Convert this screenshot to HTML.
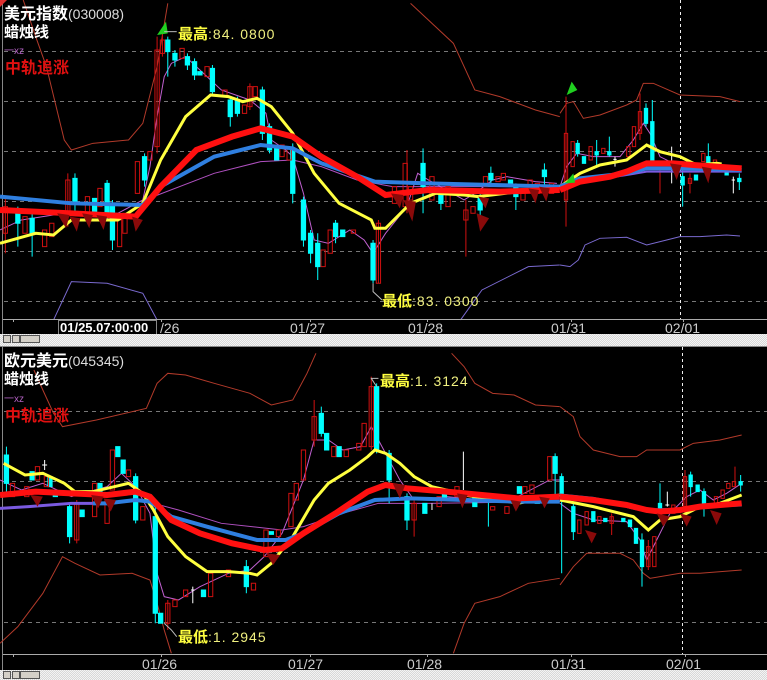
<!DOCTYPE html>
<html><head><meta charset="utf-8"><style>
html,body{margin:0;padding:0;background:#000;width:767px;height:680px;overflow:hidden}
svg{display:block}
.t{font-family:"Liberation Sans","Noto Sans CJK SC",sans-serif}
.n{vector-effect:non-scaling-stroke}
</style></head><body>
<svg width="767" height="680" viewBox="0 0 767 680" xmlns="http://www.w3.org/2000/svg">
<defs>
<pattern id="chk" width="2" height="2" patternUnits="userSpaceOnUse"><rect width="2" height="2" fill="#d8d8d8"/><rect width="1" height="1" fill="#f4f4f4"/><rect x="1" y="1" width="1" height="1" fill="#f4f4f4"/></pattern>
</defs>
<rect width="767" height="680" fill="#000"/>
<g stroke="#777" stroke-dasharray="4,4" stroke-width="1">
<line x1="4" y1="51.5" x2="767" y2="51.5"/><line x1="4" y1="101.5" x2="767" y2="101.5"/><line x1="4" y1="151.5" x2="767" y2="151.5"/><line x1="4" y1="201.5" x2="767" y2="201.5"/><line x1="4" y1="251.5" x2="767" y2="251.5"/><line x1="4" y1="301.5" x2="767" y2="301.5"/>
<line x1="4" y1="411.5" x2="767" y2="411.5"/><line x1="4" y1="481.5" x2="767" y2="481.5"/><line x1="4" y1="552.5" x2="767" y2="552.5"/><line x1="4" y1="622.5" x2="767" y2="622.5"/>
</g>
<g stroke="#eee" stroke-dasharray="3,3" stroke-width="1">
<line x1="680.5" y1="0" x2="680.5" y2="319"/><line x1="682.5" y1="347" x2="682.5" y2="654"/>
</g>
<line x1="2.5" y1="0" x2="2.5" y2="680" stroke="#888"/>

<g transform="scale(0.357,0.3333)" fill="none">
<polyline class="n" stroke="#b23a2a" stroke-width="1" points="65,0 100,110 130,200 180,420 200,450 260,430 360,420 400,370 440,200 470,10"/>
<polyline class="n" stroke="#b23a2a" stroke-width="1" points="1150,10 1270,130 1330,270 1400,290 1500,330 1568,350"/>
<polyline class="n" stroke="#7a6ad0" stroke-width="1" points="150,960 200,845 300,850 400,880 440,960"/>
<polyline class="n" stroke="#7a6ad0" stroke-width="1" points="1290,960 1350,870 1480,800 1568,795"/>
<polyline class="n" stroke="#b050c0" stroke-width="1" points="430,590 600,520 730,485 820,480 900,500 1000,540 1100,560 1568,560"/>
<polyline class="n" stroke="#c060d0" stroke-width="1" points="0,690 60,660 180,640 330,640 400,600 420,500 440,350 460,230 480,190 520,170 560,210 620,270 700,300 745,340 760,420 800,450 820,470 850,580 880,720 920,730 980,690 1020,720 1045,760 1080,700 1140,620 1170,520 1200,540 1300,600 1330,580 1380,540 1420,530 1500,545 1560,550"/>
<g stroke-width="1">
<g stroke="#0ff" fill="#0ff">
<rect class="n" x="44" y="640" width="12" height="30"/><rect class="n" x="84" y="655" width="12" height="45"/><rect class="n" x="204" y="535" width="12" height="75"/><rect class="n" x="259" y="595" width="12" height="45"/><rect class="n" x="294" y="550" width="12" height="90"/><rect class="n" x="309" y="610" width="12" height="110"/><rect class="n" x="399" y="470" width="12" height="70"/><rect class="n" x="464" y="120" width="12" height="35"/><rect class="n" x="484" y="160" width="12" height="20"/><rect class="n" x="519" y="170" width="12" height="25"/><rect class="n" x="539" y="185" width="12" height="40"/><rect class="n" x="554" y="215" width="12" height="10"/><rect class="n" x="589" y="205" width="12" height="70"/><rect class="n" x="639" y="300" width="12" height="50"/><rect class="n" x="659" y="300" width="12" height="40"/><rect class="n" x="729" y="270" width="12" height="130"/><rect class="n" x="749" y="380" width="12" height="70"/><rect class="n" x="769" y="440" width="12" height="40"/><rect class="n" x="814" y="450" width="12" height="130"/><rect class="n" x="844" y="600" width="12" height="120"/><rect class="n" x="864" y="700" width="12" height="60"/><rect class="n" x="884" y="730" width="12" height="70"/><rect class="n" x="934" y="670" width="12" height="40"/><rect class="n" x="954" y="690" width="12" height="20"/><rect class="n" x="1039" y="730" width="12" height="110"/><rect class="n" x="1179" y="490" width="12" height="70"/><rect class="n" x="1229" y="580" width="12" height="30"/><rect class="n" x="1339" y="590" width="12" height="40"/><rect class="n" x="1369" y="520" width="12" height="20"/><rect class="n" x="1424" y="540" width="12" height="10"/><rect class="n" x="1439" y="560" width="12" height="30"/><rect class="n" x="1519" y="510" width="12" height="20"/>
<path class="n" d="M50 620V740M90 640V770M210 520V640M300 540V660M315 600V750M405 460V560M470 110V230M490 150V200M525 160V210M545 175V240M595 195V285M645 290V380M665 290V350M735 260V420M755 370V460M820 430V610M850 590V740M870 690V790M890 700V840M940 660V730M1045 720V850M1185 445V640M1235 570V630M1345 580V650M1375 500V560M1445 550V630M1525 490V560"/>
</g>
<g stroke="#d01010" fill="none">
<rect class="n" x="9" y="620" width="12" height="80"/><rect class="n" x="64" y="650" width="12" height="50"/><rect class="n" x="119" y="690" width="12" height="50"/><rect class="n" x="139" y="670" width="12" height="40"/><rect class="n" x="184" y="540" width="12" height="100"/><rect class="n" x="239" y="590" width="12" height="50"/><rect class="n" x="274" y="565" width="12" height="55"/><rect class="n" x="329" y="660" width="12" height="80"/><rect class="n" x="344" y="640" width="12" height="60"/><rect class="n" x="379" y="485" width="12" height="95"/><rect class="n" x="414" y="455" width="12" height="25"/><rect class="n" x="434" y="150" width="12" height="290"/><rect class="n" x="449" y="120" width="12" height="40"/><rect class="n" x="504" y="145" width="12" height="30"/><rect class="n" x="574" y="200" width="12" height="30"/><rect class="n" x="624" y="270" width="12" height="20"/><rect class="n" x="679" y="315" width="12" height="25"/><rect class="n" x="694" y="260" width="12" height="60"/><rect class="n" x="709" y="260" width="12" height="30"/><rect class="n" x="784" y="435" width="12" height="35"/><rect class="n" x="804" y="445" width="12" height="35"/><rect class="n" x="899" y="750" width="12" height="50"/><rect class="n" x="919" y="690" width="12" height="70"/><rect class="n" x="984" y="690" width="12" height="10"/><rect class="n" x="1054" y="670" width="12" height="180"/><rect class="n" x="1099" y="560" width="12" height="50"/><rect class="n" x="1129" y="490" width="12" height="130"/><rect class="n" x="1144" y="560" width="12" height="40"/><rect class="n" x="1204" y="530" width="12" height="70"/><rect class="n" x="1249" y="560" width="12" height="60"/><rect class="n" x="1299" y="630" width="12" height="30"/><rect class="n" x="1319" y="620" width="12" height="20"/><rect class="n" x="1354" y="530" width="12" height="30"/><rect class="n" x="1389" y="530" width="12" height="15"/><rect class="n" x="1404" y="520" width="12" height="20"/><rect class="n" x="1459" y="570" width="12" height="30"/><rect class="n" x="1479" y="540" width="12" height="20"/><rect class="n" x="1499" y="550" width="12" height="30"/><rect class="n" x="1539" y="550" width="12" height="30"/>
<path class="n" d="M15 590V760M190 520V680M440 110V460M455 100V170M700 250V330M1060 660V850M1305 600V770M1140 450V640"/>
</g>
</g>
<polyline class="n" stroke="#ffff40" stroke-width="3" points="0,730 100,700 150,705 200,660 330,660 400,610 450,480 520,350 590,285 640,290 680,305 720,295 760,320 820,400 880,520 950,610 1040,660 1050,685 1080,685 1150,610 1220,580 1300,585 1340,590"/>
<polyline class="n" stroke="#ffff40" stroke-width="3" points="1340,590 1568,560"/>
<polyline class="n" stroke="#2f7fe0" stroke-width="4" points="0,590 200,610 400,615 450,560 600,470 730,435 820,445 900,490 1050,545 1200,550 1568,560"/>
<polyline class="n" stroke="#ff1010" stroke-width="6" points="0,630 200,640 380,650 450,560 550,450 650,410 730,385 820,410 900,470 1000,530 1080,585 1200,570 1400,575 1568,570"/>
<g fill="#8a0a0a">
<path d="M160,640 l35,5 l-10,40z"/><path d="M195,650 l30,5 l-10,40z"/><path d="M230,640 l30,5 l-10,40z"/><path d="M270,645 l30,5 l-10,40z"/><path d="M370,650 l30,10 l-20,35z"/><path d="M1095,580 l35,5 l-10,40z"/><path d="M1130,600 l35,5 l-10,60z"/><path d="M1335,640 l35,15 l-25,40z"/><path d="M1340,590 l30,5 l-10,30z"/><path d="M1480,565 l30,5 l-10,40z"/><path d="M1510,560 l30,5 l-10,40z"/>
</g>
<path d="M465,65 L440,105 L470,100z" fill="#20d020"/>
<polyline class="n" stroke="#bbb" stroke-width="1" points="460,95 495,95"/>
<polyline class="n" stroke="#bbb" stroke-width="1" points="1045,850 1045,875 1070,900"/>
</g>

<g transform="translate(560,0) scale(0.3333)" fill="none">
<polyline class="n" stroke="#b23a2a" stroke-width="1" points="0,340 20,310 40,305 70,355 120,345 200,315 230,300 250,250 280,250 360,285 480,290 540,305"/>
<polyline class="n" stroke="#7a6ad0" stroke-width="1" points="0,795 30,800 55,780 75,735 120,715 200,712 260,735 320,720 360,710 420,710 500,705 540,708"/>
<polyline class="n" stroke="#c060d0" stroke-width="1" points="0,560 20,500 50,460 100,470 180,470 220,420 250,370 270,400 300,470 340,490 400,510 450,505 540,510"/>
<g stroke="#0ff" fill="#0ff">
<rect class="n" x="48" y="430" width="10" height="30"/><rect class="n" x="67" y="470" width="10" height="20"/><rect class="n" x="105" y="455" width="10" height="10"/><rect class="n" x="143" y="455" width="10" height="10"/><rect class="n" x="253" y="325" width="10" height="45"/><rect class="n" x="272" y="365" width="10" height="120"/><rect class="n" x="363" y="530" width="10" height="25"/><rect class="n" x="403" y="525" width="10" height="15"/><rect class="n" x="440" y="470" width="10" height="20"/><rect class="n" x="495" y="515" width="10" height="10"/><rect class="n" x="533" y="535" width="10" height="10"/>
<path class="n" d="M53 420V470M110 420V500M148 410V470M258 310V380M277 300V490M368 500V620M445 430V500M538 520V570"/>
</g>
<g stroke="#d01010" fill="none">
<rect class="n" x="13" y="400" width="10" height="200"/><rect class="n" x="33" y="425" width="10" height="75"/><rect class="n" x="87" y="440" width="10" height="40"/><rect class="n" x="125" y="445" width="10" height="15"/><rect class="n" x="200" y="440" width="10" height="30"/><rect class="n" x="217" y="380" width="10" height="60"/><rect class="n" x="235" y="335" width="10" height="65"/><rect class="n" x="385" y="535" width="10" height="15"/><rect class="n" x="425" y="460" width="10" height="25"/><rect class="n" x="460" y="480" width="10" height="10"/>
<path class="n" d="M18 290V680M240 280V420M300 500V580M390 520V580"/>
</g>
<path class="n" stroke="#fff" d="M165 470V500M160 478H170M335 440V550M520 530V580M515 540H525"/>
<polyline class="n" stroke="#ffff40" stroke-width="3" points="0,560 60,520 120,495 200,480 260,435 300,455 360,470 410,495 470,490 485,492"/>
<polyline class="n" stroke="#7a5ae0" stroke-width="2" points="0,565 100,540 200,525 260,515 360,515 545,515"/>
<polyline class="n" stroke="#2f7fe0" stroke-width="4" points="0,560 60,535 200,520 260,505 360,505 545,510"/>
<polyline class="n" stroke="#ff1010" stroke-width="6" points="0,570 60,545 150,530 200,515 260,490 340,490 400,495 545,505"/>
<g fill="#8a0a0a"><path d="M330,490 l35,5 l-15,45z"/><path d="M425,500 l30,5 l-10,45z"/></g>
<path d="M35,245 L20,285 L52,270z" fill="#20d020"/>
<path d="M40,520 L15,550 L45,548z" fill="#20d020"/>
</g>

<g transform="translate(0,340) scale(0.357,0.3333)" fill="none">
<polyline class="n" stroke="#b23a2a" stroke-width="1" points="95,90 120,150 150,220 175,260 270,240 410,205 440,130 470,100 520,105 600,130 700,160 760,195 820,180 860,100 885,40"/>
<polyline class="n" stroke="#b23a2a" stroke-width="1" points="1265,40 1300,80 1330,130 1380,160 1440,165 1500,195 1568,200"/>
<polyline class="n" stroke="#b23a2a" stroke-width="1" points="0,910 50,860 120,760 175,650 210,670 280,705 370,700 420,720 440,790 460,870 480,940"/>
<polyline class="n" stroke="#b23a2a" stroke-width="1" points="1270,940 1300,850 1330,790 1400,770 1480,730 1568,715"/>
<polyline class="n" stroke="#c060d0" stroke-width="1" points="0,420 60,450 120,430 200,470 300,440 340,400 380,440 420,520 440,700 460,770 500,780 560,740 640,700 700,690 740,650 790,580 820,500 850,420 880,300 920,300 960,330 1010,320 1040,260 1060,300 1080,340 1120,420 1160,480 1250,470 1350,480 1450,470 1540,420 1568,420"/>
<polyline class="n" stroke="#b050c0" stroke-width="1" points="430,490 500,510 620,550 790,570 850,560 960,520 1060,490 1200,490 1568,485"/>
<g stroke="#0ff" fill="#0ff">
<rect class="n" x="12" y="345" width="12" height="85"/><rect class="n" x="84" y="395" width="12" height="25"/><rect class="n" x="134" y="410" width="12" height="30"/><rect class="n" x="149" y="460" width="12" height="10"/><rect class="n" x="189" y="500" width="12" height="90"/><rect class="n" x="224" y="510" width="12" height="20"/><rect class="n" x="274" y="430" width="12" height="30"/><rect class="n" x="324" y="320" width="12" height="30"/><rect class="n" x="339" y="360" width="12" height="40"/><rect class="n" x="374" y="410" width="12" height="130"/><rect class="n" x="429" y="530" width="12" height="290"/><rect class="n" x="444" y="820" width="12" height="30"/><rect class="n" x="564" y="750" width="12" height="20"/><rect class="n" x="684" y="680" width="12" height="60"/><rect class="n" x="754" y="575" width="12" height="8"/><rect class="n" x="894" y="220" width="12" height="60"/><rect class="n" x="909" y="280" width="12" height="50"/><rect class="n" x="944" y="320" width="12" height="30"/><rect class="n" x="1049" y="140" width="12" height="190"/><rect class="n" x="1084" y="340" width="12" height="80"/><rect class="n" x="1134" y="470" width="12" height="70"/><rect class="n" x="1184" y="490" width="12" height="30"/><rect class="n" x="1239" y="460" width="12" height="20"/><rect class="n" x="1324" y="470" width="12" height="30"/><rect class="n" x="1449" y="440" width="12" height="20"/><rect class="n" x="1499" y="470" width="12" height="20"/><rect class="n" x="1549" y="350" width="12" height="50"/>
<path class="n" d="M18 320V470M195 490V610M380 400V550M435 490V850M690 660V760M900 200V290M1055 130V340M1090 330V490M1140 460V570M1368 480V560M1555 340V470"/>
</g>
<g stroke="#d01010" fill="none">
<rect class="n" x="29" y="430" width="12" height="40"/><rect class="n" x="69" y="440" width="12" height="30"/><rect class="n" x="99" y="380" width="12" height="40"/><rect class="n" x="124" y="410" width="12" height="30"/><rect class="n" x="209" y="490" width="12" height="110"/><rect class="n" x="259" y="430" width="12" height="100"/><rect class="n" x="294" y="480" width="12" height="70"/><rect class="n" x="309" y="330" width="12" height="120"/><rect class="n" x="354" y="390" width="12" height="20"/><rect class="n" x="394" y="500" width="12" height="40"/><rect class="n" x="464" y="790" width="12" height="60"/><rect class="n" x="484" y="780" width="12" height="20"/><rect class="n" x="514" y="750" width="12" height="20"/><rect class="n" x="584" y="700" width="12" height="70"/><rect class="n" x="634" y="690" width="12" height="20"/><rect class="n" x="704" y="730" width="12" height="20"/><rect class="n" x="739" y="570" width="12" height="80"/><rect class="n" x="774" y="570" width="12" height="20"/><rect class="n" x="809" y="460" width="12" height="100"/><rect class="n" x="824" y="430" width="12" height="50"/><rect class="n" x="844" y="330" width="12" height="90"/><rect class="n" x="874" y="230" width="12" height="70"/><rect class="n" x="929" y="320" width="12" height="30"/><rect class="n" x="964" y="330" width="12" height="20"/><rect class="n" x="999" y="310" width="12" height="20"/><rect class="n" x="1014" y="250" width="12" height="70"/><rect class="n" x="1034" y="140" width="12" height="180"/><rect class="n" x="1154" y="490" width="12" height="50"/><rect class="n" x="1224" y="470" width="12" height="30"/><rect class="n" x="1274" y="440" width="12" height="30"/><rect class="n" x="1374" y="500" width="12" height="10"/><rect class="n" x="1414" y="500" width="12" height="20"/><rect class="n" x="1464" y="440" width="12" height="20"/><rect class="n" x="1484" y="435" width="12" height="25"/><rect class="n" x="1534" y="350" width="12" height="70"/>
<path class="n" d="M880 180V320M1040 110V330M1160 480V590M215 480V610M470 780V870"/>
</g>
<path class="n" stroke="#fff" d="M125 360V390M118 375H132M540 740V790M535 750H545M1298 335V450M1210 490V510"/>
<polyline class="n" stroke="#ffff40" stroke-width="3" points="10,370 70,405 120,400 180,430 210,455 260,455 320,440 360,430 400,460 430,510 470,590 520,650 580,695 640,695 700,700 720,705 760,670 820,590 880,480 920,430 980,390 1030,350 1050,330 1080,340 1120,370 1160,410 1210,440 1250,450 1300,465 1400,480 1450,490 1568,465"/>
<polyline class="n" stroke="#7a5ae0" stroke-width="3" points="0,505 80,500 200,490 260,490"/>
<polyline class="n" stroke="#2f7fe0" stroke-width="4" points="260,490 300,490 380,480 420,485 480,530 580,560 720,600 800,600 850,580 950,520 1050,480 1150,475 1300,480 1450,485 1568,485"/>
<polyline class="n" stroke="#ff1010" stroke-width="6" points="0,465 100,455 200,460 300,465 380,455 420,470 480,540 560,580 650,610 740,630 790,625 850,580 940,520 1030,455 1080,435 1140,445 1250,455 1350,465 1450,475 1568,470"/>
<g fill="#8a0a0a"><path d="M85,465 l35,5 l-15,30z"/><path d="M255,465 l35,5 l-15,35z"/><path d="M290,475 l35,5 l-15,35z"/><path d="M745,640 l40,5 l-20,30z"/><path d="M1100,430 l35,5 l-15,40z"/><path d="M1280,460 l30,5 l-15,40z"/><path d="M1430,480 l30,5 l-15,30z"/><path d="M1510,470 l30,5 l-15,30z"/></g>
<polyline class="n" stroke="#bbb" stroke-width="1" points="1055,140 1040,115 1060,115"/>
<polyline class="n" stroke="#bbb" stroke-width="1" points="460,850 480,870 495,890"/>
</g>

<g transform="translate(560,340) scale(0.3333)" fill="none">
<polyline class="n" stroke="#b23a2a" stroke-width="1" points="0,200 40,230 60,290 100,330 180,350 230,350 260,330 360,330 400,310 480,300 545,285"/>
<polyline class="n" stroke="#b23a2a" stroke-width="1" points="0,735 40,680 80,640 180,640 220,660 250,700 270,715 360,700 420,700 545,690"/>
<polyline class="n" stroke="#c060d0" stroke-width="1" points="0,490 40,520 100,540 200,545 240,600 260,660 290,600 330,520 380,470 420,450 460,480 500,460 545,430"/>
<g stroke="#0ff" fill="#0ff">
<rect class="n" x="0" y="410" width="10" height="50"/><rect class="n" x="35" y="500" width="10" height="75"/><rect class="n" x="95" y="515" width="10" height="30"/><rect class="n" x="131" y="535" width="10" height="10"/><rect class="n" x="185" y="535" width="10" height="10"/><rect class="n" x="205" y="540" width="10" height="20"/><rect class="n" x="223" y="565" width="10" height="45"/><rect class="n" x="241" y="600" width="10" height="80"/><rect class="n" x="295" y="490" width="10" height="15"/><rect class="n" x="387" y="405" width="10" height="35"/><rect class="n" x="408" y="435" width="10" height="20"/><rect class="n" x="427" y="455" width="10" height="35"/><rect class="n" x="537" y="425" width="10" height="10"/>
<path class="n" d="M5 400V700M40 490V600M246 580V740M300 430V540M392 395V470M432 445V530M542 405V455"/>
</g>
<g stroke="#d01010" fill="none">
<rect class="n" x="53" y="540" width="10" height="40"/><rect class="n" x="75" y="515" width="10" height="40"/><rect class="n" x="113" y="530" width="10" height="20"/><rect class="n" x="150" y="530" width="10" height="20"/><rect class="n" x="260" y="620" width="10" height="60"/><rect class="n" x="278" y="590" width="10" height="90"/><rect class="n" x="335" y="495" width="10" height="25"/><rect class="n" x="370" y="410" width="10" height="90"/><rect class="n" x="463" y="470" width="10" height="20"/><rect class="n" x="483" y="450" width="10" height="25"/><rect class="n" x="500" y="430" width="10" height="15"/><rect class="n" x="517" y="425" width="10" height="15"/>
<path class="n" d="M155 520V585M265 600V690M375 390V520M525 380V440"/>
</g>
<path class="n" stroke="#fff" d="M322 455V500M316 495H328"/>
<polyline class="n" stroke="#ffff40" stroke-width="3" points="0,480 100,500 220,530 265,570 300,540 360,530 420,500 480,490 545,465"/>
<polyline class="n" stroke="#7a5ae0" stroke-width="4" points="200,498 260,512 360,510"/>
<polyline class="n" stroke="#2f7fe0" stroke-width="3" points="0,465 100,475 200,495 260,510 360,508 420,500 545,495"/>
<polyline class="n" stroke="#ff1010" stroke-width="6" points="0,470 100,480 200,495 260,510 300,515 360,510 420,500 545,490"/>
<g fill="#8a0a0a"><path d="M75,570 l35,10 l-15,30z"/><path d="M290,520 l40,10 l-20,30z"/><path d="M360,520 l35,10 l-15,30z"/><path d="M450,510 l35,10 l-15,35z"/></g>
</g>

<line x1="3" y1="319.5" x2="767" y2="319.5" stroke="#aaa"/>
<line x1="3" y1="654.5" x2="767" y2="654.5" stroke="#aaa"/>
<g stroke="#aaa"><line x1="13.5" y1="319" x2="13.5" y2="322"/><line x1="161.5" y1="319" x2="161.5" y2="322"/><line x1="310.5" y1="319" x2="310.5" y2="322"/><line x1="427.5" y1="319" x2="427.5" y2="322"/><line x1="571.5" y1="319" x2="571.5" y2="322"/><line x1="683.5" y1="319" x2="683.5" y2="322"/>
<line x1="13.5" y1="654" x2="13.5" y2="657"/><line x1="161.5" y1="654" x2="161.5" y2="657"/><line x1="310.5" y1="654" x2="310.5" y2="657"/><line x1="427.5" y1="654" x2="427.5" y2="657"/><line x1="571.5" y1="654" x2="571.5" y2="657"/><line x1="685.5" y1="654" x2="685.5" y2="657"/></g>
<g class="t" fill="#ccc" font-size="14">
<text x="160" y="333">/26</text><text x="290" y="333">01/27</text><text x="408" y="333">01/28</text><text x="551" y="333">01/31</text><text x="665" y="333">02/01</text>
<text x="142" y="669">01/26</text><text x="288" y="669">01/27</text><text x="407" y="669">01/28</text><text x="551" y="669">01/31</text><text x="666" y="669">02/01</text>
</g>
<rect x="58.5" y="320.5" width="98" height="14" fill="#000" stroke="#888"/>
<text x="60" y="332" class="t" fill="#fff" font-size="13" font-weight="bold">01/25.07:00:00</text>

<rect x="0" y="334" width="767" height="12" fill="url(#chk)"/>
<rect x="0" y="670" width="767" height="10" fill="url(#chk)"/>
<g stroke="#555" fill="#d4d0c8"><rect x="3.5" y="335.5" width="7" height="7"/><rect x="12.5" y="335.5" width="7" height="7"/><rect x="20.5" y="335.5" width="19" height="7"/><rect x="3.5" y="671.5" width="7" height="7"/><rect x="12.5" y="671.5" width="7" height="7"/><rect x="20.5" y="671.5" width="19" height="7"/></g>
<line x1="0" y1="346.5" x2="767" y2="346.5" stroke="#888"/>

<g class="t">
<text x="4" y="19" fill="#fff" font-size="16" font-weight="bold">美元指数<tspan font-weight="normal" font-size="14" fill="#ddd">(030008)</tspan></text>
<text x="4" y="37" fill="#fff" font-size="15" font-weight="bold">蜡烛线</text>
<text x="4" y="54" fill="#b060c0" font-size="10">一xz</text>
<text x="5" y="73" fill="#e01010" font-size="16" font-weight="bold">中轨追涨</text>
<text x="178" y="39" fill="#ffff40" font-size="15" font-weight="bold">最高<tspan font-weight="normal" font-size="14" fill="#f0f080" letter-spacing="1">:84. 0800</tspan></text>
<text x="382" y="306" fill="#ffff40" font-size="15" font-weight="bold">最低<tspan font-weight="normal" font-size="14" fill="#f0f080" letter-spacing="1">:83. 0300</tspan></text>
<text x="4" y="366" fill="#fff" font-size="16" font-weight="bold">欧元美元<tspan font-weight="normal" font-size="14" fill="#ddd">(045345)</tspan></text>
<text x="4" y="384" fill="#fff" font-size="15" font-weight="bold">蜡烛线</text>
<text x="4" y="402" fill="#b060c0" font-size="10">一xz</text>
<text x="5" y="421" fill="#e01010" font-size="16" font-weight="bold">中轨追涨</text>
<text x="380" y="386" fill="#ffff40" font-size="15" font-weight="bold">最高<tspan font-weight="normal" font-size="14" fill="#f0f080" letter-spacing="1">:1. 3124</tspan></text>
<text x="178" y="642" fill="#ffff40" font-size="15" font-weight="bold">最低<tspan font-weight="normal" font-size="14" fill="#f0f080" letter-spacing="1">:1. 2945</tspan></text>
</g>
<path d="M0,0 L7,0 L0,7z" fill="#e03030"/>
</svg>
</body></html>
